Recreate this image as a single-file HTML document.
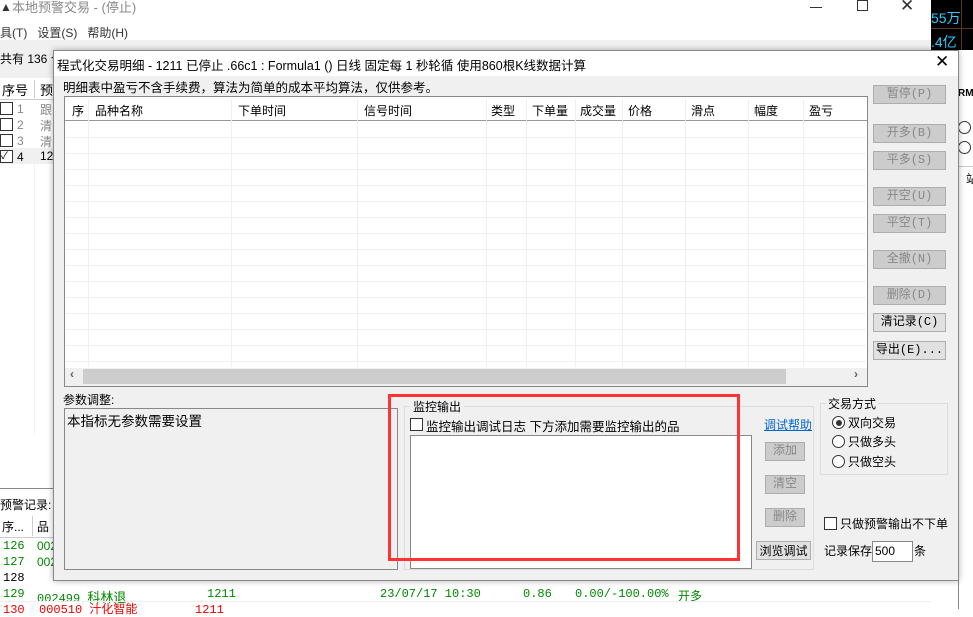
<!DOCTYPE html>
<html><head><meta charset="utf-8"><style>
*{margin:0;padding:0;box-sizing:border-box}
body{width:973px;height:609px;overflow:hidden;position:relative;background:#fff;font-family:"Liberation Sans","Noto Sans CJK SC","WenQuanYi Zen Hei",sans-serif;font-size:12px;color:#000}
.a{position:absolute;white-space:nowrap}
.btn{position:absolute;width:73px;height:19px;background:#ccc;border:1px solid #adadad;color:#888;text-align:center;line-height:17px;font-size:12px;font-family:"Liberation Mono","Noto Sans CJK SC",monospace}
.btn.en{background:#e1e1e1;color:#000}
.hl{position:absolute;left:66px;width:800px;height:1px;background:#f0f0f0}
.vl{position:absolute;width:1px;background:#f0f0f0}
.cb{position:absolute;width:13px;height:13px;border:1px solid #333;background:#fff}
.rd{position:absolute;width:13px;height:13px;border:1px solid #333;border-radius:50%;background:#fff}
</style></head><body>
<div class="a" style="left:0;top:0;width:931px;height:20px;background:#fff"></div>
<div class="a" style="left:0;top:0;color:#333;font-size:12px">&#9650;</div>
<div class="a" style="left:12px;top:0;color:#888;font-size:13px;line-height:16px">本地预警交易 - (停止)</div>
<div class="a" style="left:810px;top:7px;width:12px;height:1px;background:#333"></div>
<div class="a" style="left:857px;top:0;width:11px;height:11px;border:1px solid #333"></div>
<div class="a" style="left:900px;top:-4px;font-size:17px;color:#333">✕</div>
<div class="a" style="left:0;top:24px;color:#333;font-size:12px">具(T)&nbsp;&nbsp;&nbsp;设置(S)&nbsp;&nbsp;&nbsp;帮助(H)</div>
<div class="a" style="left:0;top:40px;width:931px;height:40px;background:#f0f0f0"></div>
<div class="a" style="left:0;top:50px;font-size:12px">共有 136 个</div>
<div class="a" style="left:931px;top:0;width:42px;height:50px;background:#000"></div>
<div class="a" style="left:961px;top:0;width:1px;height:50px;background:#5a3a1a"></div>
<div class="a" style="left:931px;top:28px;width:42px;height:1px;background:#5a3a1a"></div>
<div class="a" style="left:931px;top:8px;color:#3cf;font-size:14px">55万</div>
<div class="a" style="left:931px;top:32px;color:#3cf;font-size:14px">.4亿</div>
<div class="a" style="left:931px;top:50px;width:42px;height:559px;background:#fff"></div>
<div class="a" style="left:958px;top:88px;font-size:10px;font-weight:bold">RMU</div>
<div class="rd" style="left:958px;top:121px"></div>
<div class="rd" style="left:958px;top:141px"></div>
<div class="a" style="left:958px;top:166px;width:15px;height:1px;background:#ccc"></div>
<div class="a" style="left:966px;top:170px">站</div>
<div class="a" style="left:958px;top:80px;width:1px;height:529px;background:#888"></div>
<div class="a" style="left:0;top:78px;width:53px;height:22px;background:#fff;border-bottom:1px solid #ccc"></div>
<div class="a" style="left:2px;top:80px;font-size:13px">序号</div>
<div class="a" style="left:34px;top:80px;width:1px;height:18px;background:#ccc"></div>
<div class="a" style="left:40px;top:80px;font-size:13px">预</div>
<div class="cb" style="left:0;top:102px"></div><div class="a" style="left:17px;top:102px;color:#888">1</div><div class="a" style="left:40px;top:101px;color:#888">跟</div>
<div class="cb" style="left:0;top:118px"></div><div class="a" style="left:17px;top:118px;color:#888">2</div><div class="a" style="left:40px;top:117px;color:#888">清</div>
<div class="cb" style="left:0;top:134px"></div><div class="a" style="left:17px;top:134px;color:#888">3</div><div class="a" style="left:40px;top:133px;color:#888">清</div>
<div class="a" style="left:0;top:148px;width:53px;height:16px;background:#f0f0f0"></div>
<div class="cb" style="left:0;top:150px;font-size:10px;line-height:11px">✓</div><div class="a" style="left:17px;top:150px">4</div><div class="a" style="left:40px;top:149px">12</div>
<div class="a" style="left:34px;top:164px;width:1px;height:270px;background:#f2f2f2"></div>
<div class="a" style="left:0;top:488px;width:53px;height:1px;background:#888"></div>
<div class="a" style="left:0;top:496px;font-size:12px">预警记录:</div>
<div class="a" style="left:0;top:514px;width:53px;height:24px;border-bottom:1px solid #ccc"></div>
<div class="a" style="left:2px;top:518px">序...</div>
<div class="a" style="left:32px;top:516px;width:1px;height:20px;background:#ccc"></div>
<div class="a" style="left:37px;top:518px">品</div>
<div class="a" style="left:3px;top:539px;color:#080;font-family:'Liberation Mono',monospace">126</div><div class="a" style="left:37px;top:539px;color:#080">002</div>
<div class="a" style="left:3px;top:555px;color:#080;font-family:'Liberation Mono',monospace">127</div><div class="a" style="left:37px;top:555px;color:#080">002</div>
<div class="a" style="left:3px;top:571px;font-family:'Liberation Mono',monospace">128</div>
<div class="a" style="left:0;top:586px;width:931px;height:23px;background:#fff"></div>
<div class="a" style="left:3px;top:587px;color:#080;font-family:'Liberation Mono',monospace">129</div>
<div class="a" style="left:37px;top:587px;color:#080;font-family:'Liberation Mono',monospace">002499 <span style="font-family:'Noto Sans CJK SC';font-size:13px">科林退</span></div>
<div class="a" style="left:207px;top:587px;color:#080;font-family:'Liberation Mono',monospace">1211</div>
<div class="a" style="left:380px;top:587px;color:#080;font-family:'Liberation Mono',monospace">23/07/17 10:30</div>
<div class="a" style="left:523px;top:587px;color:#080;font-family:'Liberation Mono',monospace">0.86</div>
<div class="a" style="left:575px;top:587px;color:#080;font-family:'Liberation Mono',monospace">0.00/-100.00%</div>
<div class="a" style="left:678px;top:587px;color:#080">开多</div>
<div class="a" style="left:0;top:601px;width:931px;height:1px;background:#eee"></div>
<div class="a" style="left:3px;top:600px;color:#e00;font-family:'Liberation Mono',monospace">130&nbsp;&nbsp;000510 汁化智能&nbsp;&nbsp;&nbsp;&nbsp;&nbsp;&nbsp;&nbsp;&nbsp;1211</div>
<!-- dialog -->
<div class="a" style="left:53px;top:50px;width:906px;height:531px;background:#f0f0f0;border:1px solid #888;box-shadow:0 0 6px rgba(0,0,0,.3)"></div>
<div class="a" style="left:54px;top:51px;width:904px;height:25px;background:#fff"></div>
<div class="a" style="left:57px;top:55px;font-size:12.5px">程式化交易明细 - 1211 已停止 .66c1 : Formula1 () 日线 固定每 1 秒轮循 使用860根K线数据计算</div>
<div class="a" style="left:935px;top:52px;font-size:17px">✕</div>
<div class="a" style="left:63px;top:77px;font-size:12.5px">明细表中盈亏不含手续费，算法为简单的成本平均算法，仅供参考。</div>
<div class="a" style="left:64px;top:96px;width:804px;height:291px;background:#fff;border:1px solid #888"></div>
<div class="a" style="left:65px;top:97px;width:802px;height:24px;border-bottom:1px solid #999;background:#fff"></div>
<div class="a" style="left:72px;top:102px">序</div>
<div class="a" style="left:95px;top:102px">品种名称</div>
<div class="a" style="left:238px;top:102px">下单时间</div>
<div class="a" style="left:364px;top:102px">信号时间</div>
<div class="a" style="left:491px;top:102px">类型</div>
<div class="a" style="left:532px;top:102px">下单量</div>
<div class="a" style="left:580px;top:102px">成交量</div>
<div class="a" style="left:628px;top:102px">价格</div>
<div class="a" style="left:691px;top:102px">滑点</div>
<div class="a" style="left:754px;top:102px">幅度</div>
<div class="a" style="left:809px;top:102px">盈亏</div>
<div class="vl" style="left:88px;top:99px;height:268px"></div>
<div class="vl" style="left:231px;top:99px;height:268px"></div>
<div class="vl" style="left:357px;top:99px;height:268px"></div>
<div class="vl" style="left:486px;top:99px;height:268px"></div>
<div class="vl" style="left:526px;top:99px;height:268px"></div>
<div class="vl" style="left:575px;top:99px;height:268px"></div>
<div class="vl" style="left:622px;top:99px;height:268px"></div>
<div class="vl" style="left:685px;top:99px;height:268px"></div>
<div class="vl" style="left:748px;top:99px;height:268px"></div>
<div class="vl" style="left:803px;top:99px;height:268px"></div>
<div class="hl" style="top:137px"></div><div class="hl" style="top:153px"></div><div class="hl" style="top:169px"></div><div class="hl" style="top:185px"></div><div class="hl" style="top:201px"></div><div class="hl" style="top:217px"></div><div class="hl" style="top:233px"></div><div class="hl" style="top:249px"></div><div class="hl" style="top:265px"></div><div class="hl" style="top:281px"></div><div class="hl" style="top:297px"></div><div class="hl" style="top:313px"></div><div class="hl" style="top:329px"></div><div class="hl" style="top:345px"></div><div class="hl" style="top:361px"></div>
<div class="a" style="left:65px;top:368px;width:802px;height:18px;background:#f0f0f0"></div>
<div class="a" style="left:83px;top:369px;width:703px;height:15px;background:#cdcdcd"></div>
<div class="a" style="left:70px;top:367px;color:#606060;font-weight:bold">‹</div>
<div class="a" style="left:854px;top:367px;color:#606060;font-weight:bold">›</div>
<div class="btn" style="left:873px;top:85px">暂停(P)</div>
<div class="btn" style="left:873px;top:124px">开多(B)</div>
<div class="btn" style="left:873px;top:151px">平多(S)</div>
<div class="btn" style="left:873px;top:187px">开空(U)</div>
<div class="btn" style="left:873px;top:214px">平空(T)</div>
<div class="btn" style="left:873px;top:250px">全撤(N)</div>
<div class="btn" style="left:873px;top:286px">删除(D)</div>
<div class="btn en" style="left:873px;top:313px">清记录(C)</div>
<div class="btn en" style="left:873px;top:341px">导出(E)...</div>
<div class="a" style="left:63px;top:391px">参数调整:</div>
<div class="a" style="left:64px;top:408px;width:334px;height:162px;border:1px solid #888;background:#f0f0f0"></div>
<div class="a" style="left:67px;top:410px;font-size:13.5px">本指标无参数需要设置</div>
<div class="a" style="left:404px;top:406px;width:410px;height:164px;border:1px solid #dcdcdc"></div>
<div class="a" style="left:410px;top:398px;background:#f0f0f0;padding:0 3px">监控输出</div>
<div class="cb" style="left:410px;top:418px"></div>
<div class="a" style="left:426px;top:416px;font-size:12.5px">监控输出调试日志 下方添加需要监控输出的品</div>
<div class="a" style="left:410px;top:435px;width:342px;height:134px;background:#fff;border:1px solid #888"></div>
<div class="a" style="left:764px;top:416px;color:#06c;text-decoration:underline">调试帮助</div>
<div class="btn" style="left:765px;top:442px;width:40px">添加</div>
<div class="btn" style="left:765px;top:475px;width:40px">清空</div>
<div class="btn" style="left:765px;top:508px;width:40px">删除</div>
<div class="btn en" style="left:756px;top:541px;width:55px;color:#000;font-family:'Noto Sans CJK SC',sans-serif">浏览调试</div>
<div class="a" style="left:388px;top:394px;width:352px;height:167px;border:3px solid #f33"></div>
<div class="a" style="left:820px;top:403px;width:128px;height:72px;border:1px solid #dcdcdc"></div>
<div class="a" style="left:826px;top:395px;background:#f0f0f0;padding:0 2px">交易方式</div>
<div class="rd" style="left:832px;top:416px"></div><div class="a" style="left:836px;top:420px;width:6px;height:6px;border-radius:50%;background:#333"></div>
<div class="a" style="left:848px;top:414px">双向交易</div>
<div class="rd" style="left:832px;top:435px"></div><div class="a" style="left:848px;top:433px">只做多头</div>
<div class="rd" style="left:832px;top:455px"></div><div class="a" style="left:848px;top:453px">只做空头</div>
<div class="cb" style="left:824px;top:517px"></div>
<div class="a" style="left:840px;top:515px">只做预警输出不下单</div>
<div class="a" style="left:824px;top:542px">记录保存</div>
<div class="a" style="left:872px;top:541px;width:41px;height:21px;background:#fff;border:1px solid #888;padding:2px 2px;font-size:12px">500</div>
<div class="a" style="left:914px;top:542px">条</div>
</body></html>
